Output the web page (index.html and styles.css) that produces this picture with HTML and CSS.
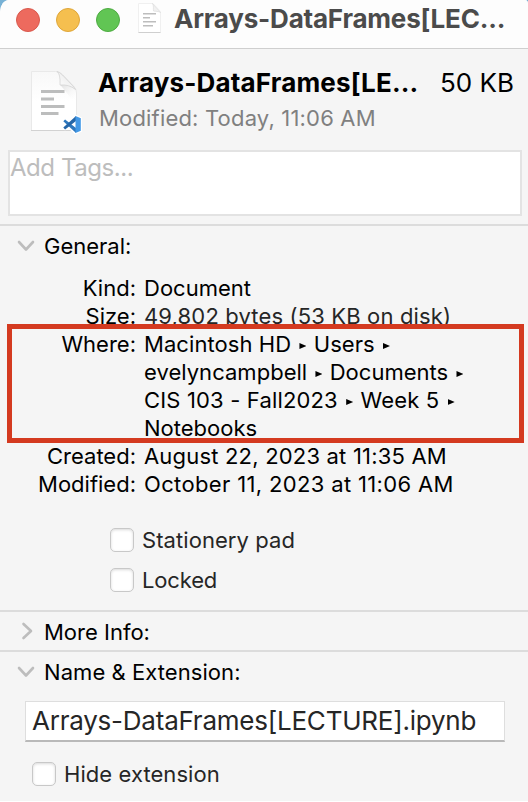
FILE: index.html
```html
<!DOCTYPE html>
<html lang="en">
<head>
<meta charset="utf-8">
<title>Arrays-DataFrames[LECTURE].ipynb Info</title>
<link rel="stylesheet" href="styles.css">
</head>
<body>
<main class="window">
  <header class="titlebar">
    <div class="lights"><i class="light red"></i><i class="light yellow"></i><i class="light green"></i></div>
    <svg class="mini-doc" width="26" height="32" viewBox="0 0 26 32">
      <path d="M1.500 1.500h14.500l7.500 8v21h-22z" fill="#fff" stroke="#f0f0f0"/>
      <path d="M1.500 30.500h22" stroke="#cfcfcf"/>
      <path d="M15.500 1.500c1.500 2 .5 5.500 1 7.500 2 .5 5 0 7 1.500z" fill="#f1f1f1" stroke="#ddd" stroke-width=".7"/>
      <path d="M6 11.700h13M6 15.700h7M6 19.700h13M6 23.700h10" stroke="#bdbdbd" stroke-width="1.600"/>
    </svg>
    <h1 class="title">Arrays-DataFrames[LEC...</h1>
  </header>

  <section class="summary">
    <svg class="doc" width="52" height="64" viewBox="0 0 52 64">
      <defs>
        <linearGradient id="sheet" x1="0" y1="0" x2="0" y2="1"><stop offset="0" stop-color="#f8f8f8"/><stop offset=".5" stop-color="#fff"/></linearGradient>
        <linearGradient id="fold" x1="0" y1="1" x2="1" y2="0"><stop offset="0" stop-color="#fff"/><stop offset=".5" stop-color="#f2f2f2"/><stop offset="1" stop-color="#bbb"/></linearGradient>
        <linearGradient id="shade" x1="0" y1="0" x2=".7" y2="1"><stop offset="0" stop-color="#dedede"/><stop offset="1" stop-color="#fff" stop-opacity="0"/></linearGradient>
      </defs>
      <path d="M1.500 1.500h24q4 0 7 3l11 11.500q3 3 3 7v37.500h-45z" fill="url(#sheet)" stroke="#e9e9e9"/>
      <path d="M1 60.500h45" stroke="#d2d2d2"/>
      <path d="M30 14.500h13q3 3 3 8v12z" fill="url(#shade)"/>
      <path d="M27 1.500q3.500 2 3 13.500 9-.8 15.500 4.500-1-2-3-4l-10-10.500q-3-3-5.500-3.500z" fill="url(#fold)" stroke="#c9c9c9" stroke-width=".6"/>
      <path d="M11 21.500h23.500M11 29h13M11 36.500h23.500M11 43.500h17.500" stroke="#bcbdbd" stroke-width="3"/>
      <g stroke="#fff" stroke-width="2.500" stroke-linejoin="round" fill="#fff"><path d="M45.500 46l5.500 2.300v12.400L45.500 63 33.500 52v-1l1.500-1 10.500 9zM33.500 58l12-12v4.500L35 59z"/></g>
      <path d="M33.300 51.200l1.800-1.600L46 58V63z" fill="#2d77bd"/>
      <path d="M33.300 57.600l1.800 1.800L46 51V46z" fill="#2466a8"/>
      <path d="M45.500 46l5.300 2.200v12.600L45.500 63z" fill="#4298e6"/>
    </svg>
    <div class="facts">
      <div class="headline"><strong class="name">Arrays-DataFrames[LE...</strong><span class="filesize">50 KB</span></div>
      <p class="changed">Modified: Today, 11:06 AM</p>
    </div>
  </section>

  <div class="tags"><span class="hint">Add Tags...</span></div>

  <section class="general">
    <h2 class="heading"><svg class="chevron" width="18" height="14" viewBox="0 0 18 14"><path d="M2 3l7 7.500L16 3"/></svg><span>General:</span></h2>
    <dl class="details">
      <dt>Kind:</dt><dd>Document</dd>
      <dt>Size:</dt><dd class="soft v-size">49,802 bytes (53 KB on disk)</dd>
      <dt>Where:</dt>
      <dd class="path">
        <span class="p1">Macintosh HD <i class="arrow"></i> Users <i class="arrow"></i></span>
        <span class="p2">evelyncampbell <i class="arrow"></i> Documents <i class="arrow"></i></span>
        <span class="p3">CIS 103 - Fall2023 <i class="arrow"></i> Week 5 <i class="arrow"></i></span>
        <span>Notebooks</span>
      </dd>
      <dt>Created:</dt><dd class="v-created">August 22, 2023 at 11:35 AM</dd>
      <dt>Modified:</dt><dd class="v-modified">October 11, 2023 at 11:06 AM</dd>
      <div class="highlight"></div>
    </dl>
    <div class="options">
      <label class="option"><i class="box"></i><span class="t-pad">Stationery pad</span></label>
      <label class="option"><i class="box"></i><span class="t-locked">Locked</span></label>
    </div>
  </section>

  <section class="more">
    <h2 class="heading"><svg class="chevron side" width="18" height="18" viewBox="0 0 18 18"><path d="M5.500 2l7.500 7-7.500 7"/></svg><span>More Info:</span></h2>
  </section>

  <section class="naming">
    <h2 class="heading"><svg class="chevron" width="18" height="14" viewBox="0 0 18 14"><path d="M2 3l7 7.500L16 3"/></svg><span class="t-name">Name &amp; Extension:</span></h2>
    <div class="field"><span>Arrays-DataFrames[LECTURE].ipynb</span></div>
    <label class="option hide"><i class="box"></i><span class="t-hide">Hide extension</span></label>
  </section>
</main>
</body>
</html>
```
FILE: styles.css
```css
* { box-sizing: border-box; margin: 0; padding: 0; }
body { background: #78b2d6; font-family: Inter, "Liberation Sans", sans-serif; font-size: 22px; line-height: 28px; color: #000; overflow: hidden; }
h1, h2, dt, dd, span, p { font-weight: 400; white-space: nowrap; }
.window { width: 528px; height: 802px; background: #f5f5f5; border-bottom: 1px solid #fff; border-radius: 9px 3px 0 0 / 12px 4px 0 0; overflow: hidden; }

.titlebar { display: flex; height: 49px; padding-left: 16px; background: #fdfdfd; border-bottom: 1px solid #cfcfcf; }
.lights { display: flex; gap: 16px; padding-top: 8px; }
.light { width: 24px; height: 24px; border-radius: 50%; border: 1px solid; }
.red { background: #ed6a5e; border-color: #d8594d; }
.yellow { background: #f5bf4f; border-color: #dea63a; }
.green { background: #61c554; border-color: #4eab42; }
.mini-doc { margin: 2px 0 0 17px; }
.title { margin: 3px 0 0 11px; font-size: 26px; line-height: 32px; font-weight: 700; letter-spacing: -.2px; color: #4b4b4b; }

.summary { display: flex; height: 101px; padding: 21px 0 0 30px; }
.facts { margin-left: 16px; width: 416px; }
.headline { display: flex; justify-content: space-between; line-height: 26px; font-size: 26px; }
.name { font-weight: 700; letter-spacing: .16px; }
.changed { color: #808080; margin: 8px 0 0 1px; letter-spacing: .18px; }

.tags { width: 514px; height: 66px; margin-left: 8px; background: #fff; border: 2px solid #e3e3e3; padding: 2px 0 0; font-size: 24px; letter-spacing: -.45px; color: #bdbdbd; }
.general { margin-top: 8px; height: 386px; border-top: 2px solid #dcdcdc; padding-top: 6px; }
.more { height: 40px; border-top: 2px solid #dcdcdc; padding-top: 6px; }
.naming { border-top: 2px solid #dcdcdc; padding-top: 6px; }
.heading { display: flex; align-items: center; height: 28px; font-size: 22px; padding-left: 17px; gap: 9px; }
.chevron { fill: none; stroke: #bdbdbd; stroke-width: 2.6; stroke-linecap: round; stroke-linejoin: round; }
.side { position: relative; top: -1px; left: 1px; }
.t-name { letter-spacing: .06px; }

.details { position: relative; display: grid; grid-template-columns: 136px auto; column-gap: 8px; margin-top: 14px; }
dt { text-align: right; }
.soft { color: #262626; }
.v-size { letter-spacing: .15px; }
.v-created { letter-spacing: .19px; }
.v-modified { letter-spacing: .35px; }
.path span { display: block; }
.p1 { letter-spacing: .07px; }
.p2 { letter-spacing: .03px; }
.p3 { letter-spacing: .16px; }
.arrow { display: inline-block; width: 7px; height: 6px; margin: 0 1px 0 2px; background: #000; clip-path: polygon(0 0, 100% 50%, 0 100%); vertical-align: 3px; }
.highlight { position: absolute; left: 7px; top: 50px; width: 517px; height: 119px; border: 5px solid #d43a20; }

.options { display: grid; row-gap: 12px; margin: 28px 0 0 110px; }
.option { display: flex; align-items: center; gap: 8px; color: #262626; }
.t-pad, .t-hide { letter-spacing: .07px; }
.t-locked { letter-spacing: -.15px; }
.box { width: 24px; height: 24px; border-radius: 5px; background: #fff; border: 1px solid #c8c8c8; box-shadow: inset 0 1px 3px #d9d9d9; }
.field { width: 480px; height: 41px; margin: 15px 0 0 25px; padding: 5px 0 0 6px; background: #fff; border: 1px solid #dedede; border-bottom: 2px solid #b9b9b9; font-size: 26px; letter-spacing: -.23px; color: #262626; }
.hide { margin: 18px 0 0 32px; }
```
